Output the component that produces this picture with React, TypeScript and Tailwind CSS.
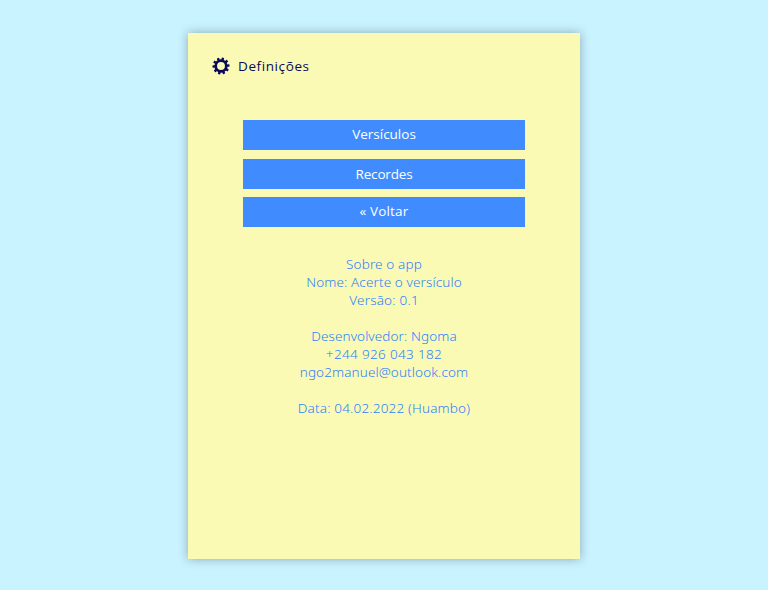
import React from 'react';

const teeth = [0, 36, 72, 108, 144, 180, 216, 252, 288, 324];

function GearIcon() {
  return (
    <svg viewBox="-9 -9 18 18" className="size-[18px]" fill="#0a0a5c" aria-hidden="true">
      <circle r="5.3" fill="none" stroke="#0a0a5c" strokeWidth="2.7" />
      {teeth.map((a) => (
        <rect key={a} x="-1.2" y="-8.5" width="2.4" height="3" rx="0.4" transform={`rotate(${a + 14})`} />
      ))}
    </svg>
  );
}

const button = 'h-[30px] w-full bg-[#408cff] text-center text-[13.5px] text-white';

const about = [
  { text: 'Sobre o app', tracking: 'tracking-[0.14px]' },
  { text: 'Nome: Acerte o versículo', tracking: 'tracking-[0.12px]' },
  { text: 'Versão: 0.1', tracking: 'tracking-[0.2px]' },
  { text: '', tracking: '' },
  { text: 'Desenvolvedor: Ngoma', tracking: 'tracking-[0.1px]' },
  { text: '+244 926 043 182', tracking: 'tracking-[0.35px]' },
  { text: 'ngo2manuel@outlook.com', tracking: 'tracking-[0.12px]' },
  { text: '', tracking: '' },
  { text: 'Data: 04.02.2022 (Huambo)', tracking: 'tracking-[0.18px]' },
];

export default function App() {
  return (
    <div className="flex h-[590px] justify-center bg-[#c9f3ff] pt-[33px] font-['Open_Sans',sans-serif]">
      <main className="h-[526px] w-[392px] bg-[#fafab4] shadow-[0_0_10px_rgba(0,0,0,0.3)]">
        <header className="flex h-[66px] items-center gap-2 pl-6">
          <GearIcon />
          <h1 className="text-[13.5px] font-medium tracking-[0.6px] text-[#0a0a5c]">Definições</h1>
        </header>
        <nav className="mx-auto mt-[21px] flex w-[282px] flex-col">
          <button className={`${button} pb-[2px] tracking-[0px]`}>Versículos</button>
          <button className={`${button} mt-[9px] tracking-[-0.15px]`}>Recordes</button>
          <button className={`${button} mt-2 pb-[2px] tracking-[0.15px]`}>« Voltar</button>
        </nav>
        <section className="mt-[28px] text-center font-['Noto_Sans',sans-serif] text-[13.5px] leading-[18px] font-light text-[#2f80ff]">
          {about.map((line, i) => (
            <p key={i} className={`h-[18px] ${line.tracking}`}>{line.text}</p>
          ))}
        </section>
      </main>
    </div>
  );
}
